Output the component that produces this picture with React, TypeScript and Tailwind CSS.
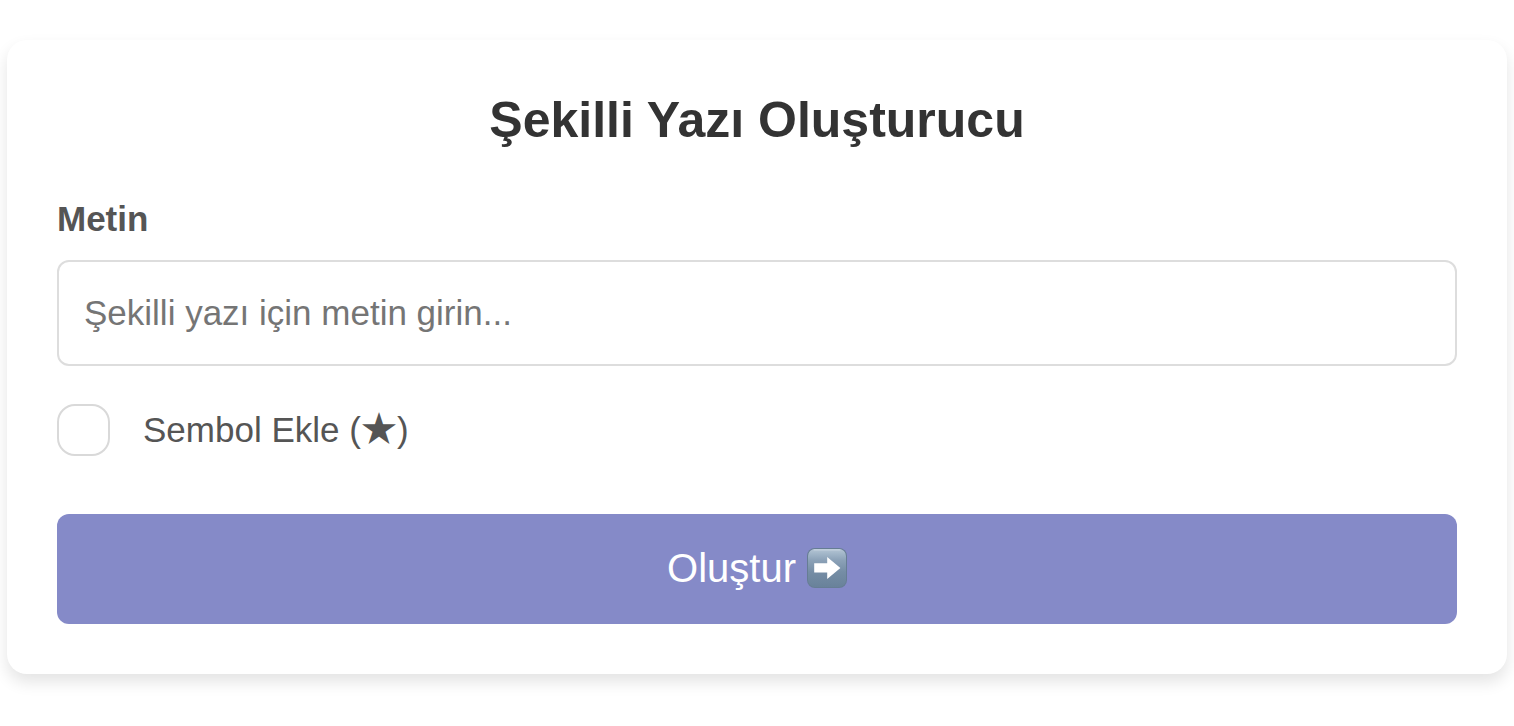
import { useState } from "react";

function ArrowBadge() {
  return (
    <svg viewBox="0 0 40 40" className="size-10 shrink-0" role="img" aria-label="➡️">
      <defs>
        <linearGradient id="badge-face" x1="0" y1="0" x2="0" y2="1">
          <stop offset="0" stopColor="#b4c5d4" />
          <stop offset="0.12" stopColor="#a3b7c9" />
          <stop offset="0.3" stopColor="#8ba1b7" />
          <stop offset="0.6" stopColor="#758da5" />
          <stop offset="1" stopColor="#69829a" />
        </linearGradient>
      </defs>
      <rect width="40" height="40" rx="8" fill="#667d94" />
      <rect x="1" y="1" width="38" height="38" rx="7" fill="url(#badge-face)" />
      <path d="M7 1.8H33" stroke="#c3d1de" strokeWidth="1.2" strokeLinecap="round" />
      <path d="M7.2 15.2H20.2V9L33.4 20L20.2 31V24.4H7.2Z" fill="#fff" />
    </svg>
  );
}

export default function App() {
  const [text, setText] = useState("");
  const [symbol, setSymbol] = useState(false);

  return (
    <main className="min-h-screen bg-white px-[7px] py-10 font-['Liberation_Sans',Arial,sans-serif]">
      <form
        className="rounded-[20px] bg-white p-[50px] shadow-[0_8px_16px_rgba(0,0,0,0.11)]"
        onSubmit={(e) => e.preventDefault()}
      >
        <h1 className="mb-12 text-center text-[50px] leading-[60px] font-bold text-[#333]">
          Şekilli Yazı Oluşturucu
        </h1>
        <label htmlFor="metin" className="mb-5 block text-[35px] leading-[42px] font-bold text-[#555]">
          Metin
        </label>
        <input
          id="metin"
          type="text"
          value={text}
          onChange={(e) => setText(e.target.value)}
          placeholder="Şekilli yazı için metin girin..."
          className="block h-[106px] w-full rounded-xl border-2 border-[#ddd] bg-white px-[25px] text-[35px] text-[#333] outline-none placeholder:text-[#757575] focus:border-[#858ac8]"
        />
        <div className="mt-[38px] flex h-[52px] items-center gap-[33px]">
          <input
            id="sembol"
            type="checkbox"
            checked={symbol}
            onChange={(e) => setSymbol(e.target.checked)}
            className="h-[52px] w-[53px] shrink-0 appearance-none rounded-[18px] border-2 border-[#d9d9d9] bg-white checked:bg-[#858ac8]"
          />
          <label htmlFor="sembol" className="text-[35px] leading-[52px] text-[#555]">
            Sembol Ekle (<span className="font-['Noto_Sans_CJK_SC',sans-serif] text-[36px] leading-none">★</span>)
          </label>
        </div>
        <button
          type="submit"
          className="mt-[58px] flex h-[110px] w-full items-center justify-center gap-[11px] rounded-xl bg-[#858ac8] pb-[2px] text-[40px] leading-[50px] text-white"
        >
          Oluştur
          <ArrowBadge />
        </button>
      </form>
    </main>
  );
}
